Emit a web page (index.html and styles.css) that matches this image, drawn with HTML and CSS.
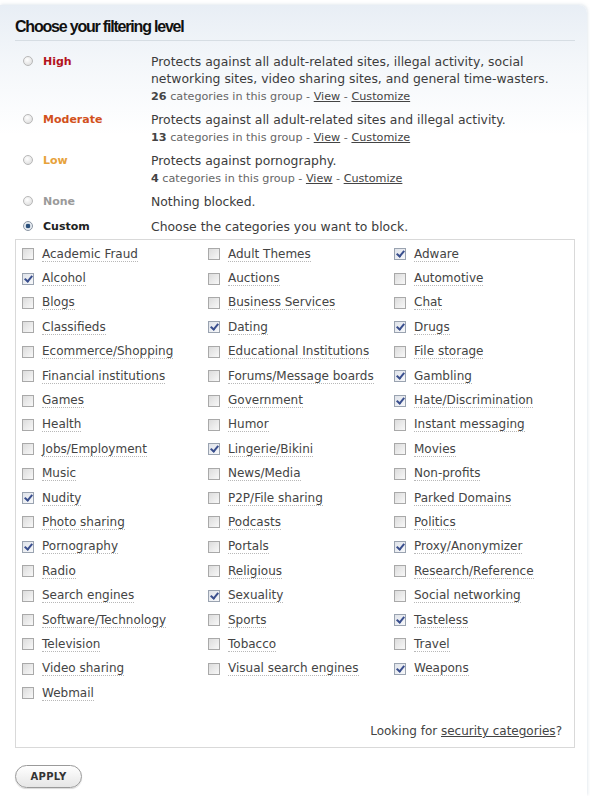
FILE: index.html
```html
<!DOCTYPE html>
<html lang="en">
<head>
    <meta charset="UTF-8">
    <title>Filtering level</title>
    <link rel="stylesheet" href="styles.css">
</head>
<body>
    <div class="panel">
        <h1 class="panel-title">Choose your filtering level</h1>

        <div class="levels">
            <div class="level">
                <span class="radio"></span>
                <span class="level-name high">High</span>
                <div class="level-info">
                    <p class="desc">Protects against all adult-related sites, illegal activity, social networking sites, video sharing sites, and general time-wasters.</p>
                    <p class="meta"><b>26</b> categories in this group - <a href="#">View</a> - <a href="#">Customize</a></p>
                </div>
            </div>
            <div class="level">
                <span class="radio"></span>
                <span class="level-name moderate">Moderate</span>
                <div class="level-info">
                    <p class="desc">Protects against all adult-related sites and illegal activity.</p>
                    <p class="meta"><b>13</b> categories in this group - <a href="#">View</a> - <a href="#">Customize</a></p>
                </div>
            </div>
            <div class="level">
                <span class="radio"></span>
                <span class="level-name low">Low</span>
                <div class="level-info">
                    <p class="desc">Protects against pornography.</p>
                    <p class="meta"><b>4</b> categories in this group - <a href="#">View</a> - <a href="#">Customize</a></p>
                </div>
            </div>
            <div class="level level-none">
                <span class="radio"></span>
                <span class="level-name none">None</span>
                <div class="level-info">
                    <p class="desc">Nothing blocked.</p>
                </div>
            </div>
            <div class="level level-custom">
                <span class="radio checked"></span>
                <span class="level-name custom">Custom</span>
                <div class="level-info">
                    <p class="desc">Choose the categories you want to block.</p>
                </div>
            </div>
        </div>

        <div class="categories">
            <div class="cat-grid" id="cat-grid"></div>
            <p class="security">Looking for <a href="#">security categories</a>?</p>
        </div>

        <button class="apply">APPLY</button>
    </div>

    <script>
        const categories = [
            ['Academic Fraud', 0], ['Adult Themes', 0], ['Adware', 1],
            ['Alcohol', 1], ['Auctions', 0], ['Automotive', 0],
            ['Blogs', 0], ['Business Services', 0], ['Chat', 0],
            ['Classifieds', 0], ['Dating', 1], ['Drugs', 1],
            ['Ecommerce/Shopping', 0], ['Educational Institutions', 0], ['File storage', 0],
            ['Financial institutions', 0], ['Forums/Message boards', 0], ['Gambling', 1],
            ['Games', 0], ['Government', 0], ['Hate/Discrimination', 1],
            ['Health', 0], ['Humor', 0], ['Instant messaging', 0],
            ['Jobs/Employment', 0], ['Lingerie/Bikini', 1], ['Movies', 0],
            ['Music', 0], ['News/Media', 0], ['Non-profits', 0],
            ['Nudity', 1], ['P2P/File sharing', 0], ['Parked Domains', 0],
            ['Photo sharing', 0], ['Podcasts', 0], ['Politics', 0],
            ['Pornography', 1], ['Portals', 0], ['Proxy/Anonymizer', 1],
            ['Radio', 0], ['Religious', 0], ['Research/Reference', 0],
            ['Search engines', 0], ['Sexuality', 1], ['Social networking', 0],
            ['Software/Technology', 0], ['Sports', 0], ['Tasteless', 1],
            ['Television', 0], ['Tobacco', 0], ['Travel', 0],
            ['Video sharing', 0], ['Visual search engines', 0], ['Weapons', 1],
            ['Webmail', 0]
        ];

        const grid = document.getElementById('cat-grid');
        categories.forEach(([name, checked]) => {
            const item = document.createElement('label');
            item.className = 'cat';
            item.innerHTML = `<span class="box${checked ? ' checked' : ''}"></span><span class="cat-name">${name}</span>`;
            grid.appendChild(item);
        });
    </script>
</body>
</html>
```

FILE: styles.css
```css
body {
    margin: 0;
    padding: 0;
    background: #ffffff;
    font-family: "DejaVu Sans", Verdana, sans-serif;
    color: #333;
}

.panel {
    margin: 5px 3px 0 0;
    padding: 12px 12px 8px 15px;
    border-radius: 0 8px 0 0;
    background: linear-gradient(to bottom, #e8eef5 0px, #f4f7fa 60px, #ffffff 130px);
    box-shadow: 1px -1px 3px rgba(180, 195, 210, 0.35);
}

.panel-title {
    margin: 0;
    padding-bottom: 4px;
    border-bottom: 1px solid #d6dde3;
    font-family: "Liberation Sans", Arial, sans-serif;
    font-size: 16px;
    font-weight: bold;
    letter-spacing: -1.2px;
    color: #111;
    line-height: 19px;
}

.levels {
    padding: 12px 0 0 0;
}

.level {
    display: flex;
    align-items: flex-start;
    margin-bottom: 5px;
}

.level-none {
    margin-bottom: 8px;
}

.level-custom {
    margin-bottom: 4px;
}

.radio {
    flex: none;
    width: 10px;
    height: 10px;
    margin: 3px 10px 0 8px;
    border: 1px solid #b8b8b8;
    border-radius: 50%;
    background: radial-gradient(circle at 40% 35%, #ffffff, #d8d8d8);
    box-sizing: border-box;
}

.radio.checked {
    border-color: #8a95a3;
    background: radial-gradient(circle, #2a4f7a 0, #2a4f7a 2px, #dfe5ec 2.6px, #f4f6f8 100%);
}

.level-name {
    flex: none;
    width: 108px;
    font-size: 11px;
    font-weight: bold;
    line-height: 17px;
}

.high { color: #b3141c; }
.moderate { color: #d2511c; }
.low { color: #e7a23a; }
.none { color: #9a9a9a; }
.custom { color: #222; }

.level-info {
    width: 415px;
}

.desc {
    margin: 0;
    font-size: 12.4px;
    line-height: 17px;
    color: #3c3c3c;
}

.meta {
    margin: 1px 0 0 0;
    font-size: 11.2px;
    line-height: 18px;
    color: #666;
}

.meta b {
    color: #444;
}

.meta a,
.security a {
    color: #444;
    text-decoration: underline;
}

.categories {
    border: 1px solid #d9d9d9;
    padding: 2px 6px 9px 5px;
}

.cat-grid {
    display: grid;
    grid-template-columns: 186px 186px 164px;
    grid-auto-rows: 24.4px;
}

.cat {
    display: flex;
    align-items: center;
}

.box {
    position: relative;
    flex: none;
    width: 12px;
    height: 12px;
    margin: 0 8px 0 1px;
    border: 1px solid #a9a9a9;
    background: linear-gradient(to bottom right, #dcdcdc, #f8f8f8);
    box-sizing: border-box;
}

.box.checked {
    border-color: #9aa3b0;
    background: linear-gradient(to bottom right, #dfe3ea, #f7f8fa);
}

.box.checked::after {
    content: '';
    position: absolute;
    left: 3px;
    top: 0px;
    width: 3px;
    height: 6px;
    border: solid #3a4f8e;
    border-width: 0 2px 2px 0;
    transform: rotate(40deg);
}

.cat-name {
    font-size: 12px;
    color: #444;
    border-bottom: 1px dotted #b8b8b8;
    line-height: 14px;
}

.security {
    margin: 19px 6px 0 0;
    text-align: right;
    font-size: 12px;
    color: #444;
}

.apply {
    margin-top: 17px;
    width: 67px;
    height: 23px;
    border: 1px solid #9a9a9a;
    border-radius: 12px;
    background: linear-gradient(to bottom, #ffffff, #e6e6e6);
    font-family: "DejaVu Sans", Verdana, sans-serif;
    font-size: 10px;
    font-weight: bold;
    letter-spacing: 0.3px;
    color: #333;
    box-shadow: 0 1px 1px rgba(0, 0, 0, 0.15);
}
```
